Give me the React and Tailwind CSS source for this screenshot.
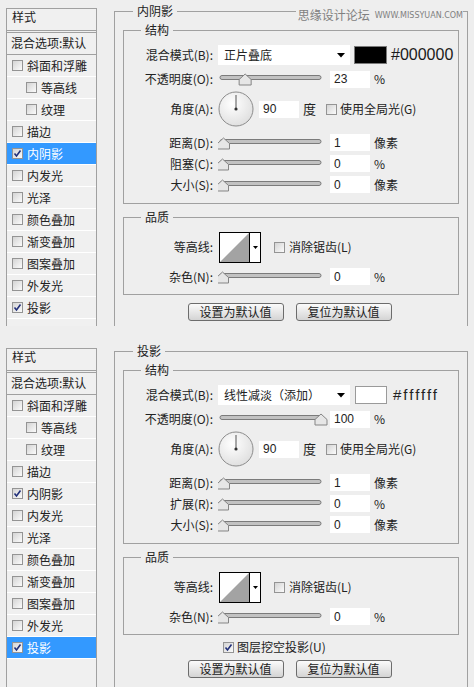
import React from "react";

const items = [
  { name: "斜面和浮雕" },
  { name: "等高线", indent: true },
  { name: "纹理", indent: true },
  { name: "描边" },
  { name: "内阴影", checked: true },
  { name: "内发光" },
  { name: "光泽" },
  { name: "颜色叠加" },
  { name: "渐变叠加" },
  { name: "图案叠加" },
  { name: "外发光" },
  { name: "投影", checked: true },
];

function Box({ checked }) {
  return (
    <span className="inline-flex h-[11px] w-[11px] shrink-0 items-center justify-center border border-[#949494] bg-linear-to-br from-[#d4d4d4] to-[#fbfbfb]">
      {checked && (
        <svg width="9" height="9" viewBox="0 0 9 9">
          <path d="M1.5 4.5 L3.5 7 L7.5 1.5" fill="none" stroke="#22307a" strokeWidth="1.6" />
        </svg>
      )}
    </span>
  );
}

function StyleList({ active, height }) {
  return (
    <div className={`ml-[6px] mt-[8px] w-[91px] shrink-0 border border-b-0 border-[#a0a0a0] bg-[#f0f0f0] ${height}`}>
      <div className="h-[24px] border-b-[3px] border-double border-[#a0a0a0] pl-[5px]">样式</div>
      <div className="flex h-[22px] items-center border-b border-[#a0a0a0] pb-[2px] pl-[4px]">混合选项:默认</div>
      {items.map((it) => (
        <div
          key={it.name}
          className={`flex h-[22px] items-center gap-[4px] border-b border-white ${it.indent ? "pl-[19px]" : "pl-[5px]"} ${
            active === it.name ? "bg-[#3399ff] text-white" : ""
          }`}
        >
          <Box checked={it.checked} />
          <span>{it.name}</span>
        </div>
      ))}
    </div>
  );
}

function Label({ children }) {
  return <span className="w-[89px] shrink-0 text-right">{children}</span>;
}

function Slider({ value }) {
  const cx = 4.5 + value * 0.985;
  return (
    <svg width="112" height="16" className="ml-[5px] shrink-0">
      <rect x="2" y="4.5" width="101" height="4" rx="2" fill="#c2c2c2" stroke="#7b7b7b" />
      <path
        d={`M${cx} 3 L${cx + 6} 8.5 L${cx + 6} 14 L${cx - 6} 14 L${cx - 6} 8.5 Z`}
        fill="#e6e6e6"
        stroke="#858585"
      />
    </svg>
  );
}

function Field({ value, className = "" }) {
  return (
    <span className={`flex h-[17px] w-[40px] shrink-0 items-center bg-white pl-[4px] font-[family-name:'Liberation_Sans',sans-serif] text-[12px] ${className}`}>
      {value}
    </span>
  );
}

function SliderRow({ label, value, unit }) {
  return (
    <div className="flex h-[21px] items-center">
      <Label>{label}</Label>
      <Slider value={value} />
      <Field value={value} />
      <span className="ml-[4px]">{unit}</span>
    </div>
  );
}

function Dial() {
  return (
    <svg width="36" height="36" className="ml-[5px] shrink-0">
      <defs>
        <radialGradient id="dialg" cx="40%" cy="35%" r="70%">
          <stop offset="0%" stopColor="#ffffff" />
          <stop offset="100%" stopColor="#dedede" />
        </radialGradient>
      </defs>
      <circle cx="18" cy="18" r="17" fill="url(#dialg)" stroke="#8c8c8c" />
      <line x1="18" y1="18" x2="18" y2="4" stroke="#555" />
      <circle cx="18" cy="18" r="1.6" fill="#333" />
    </svg>
  );
}

function Contour() {
  return (
    <svg width="42" height="31" className="ml-[6px] shrink-0">
      <rect x="0.5" y="0.5" width="41" height="30" fill="#fff" stroke="#000" />
      <polygon points="1,30 30,1 30,30" fill="#a3a3a3" />
      <line x1="30.5" y1="0" x2="30.5" y2="31" stroke="#000" />
      <polygon points="34,14 39,14 36.5,17" fill="#000" />
    </svg>
  );
}

function Arrow() {
  return (
    <svg width="8" height="5">
      <polygon points="0,0 8,0 4,4.5" fill="#000" />
    </svg>
  );
}

function Btn({ children }) {
  return (
    <button className="h-[18px] w-[96px] rounded-[3px] border border-[#6c6c6c] bg-linear-to-b from-[#fbfbfb] to-[#d4d4d4] text-[12px] leading-[16px] text-[#222]">
      {children}
    </button>
  );
}

function Panel({ title, mode, swatch, hex, opacity, second, active }) {
  return (
    <div className={`flex ${second ? "h-[347px]" : "h-[340px]"}`}>
      <StyleList active={active} height={second ? "h-[339px]" : "h-[318px]"} />
      <div className="ml-[17px] pt-[3px]">
        <fieldset
          className={`w-[354px] border border-b-0 border-[#a0a0a0] px-[8px] ${second ? "h-[344px]" : "h-[323px]"}`}
        >
          <legend className="ml-[10px] px-[4px] leading-[16px]">{title}</legend>

          <fieldset className="mt-[3px] border border-[#a0a0a0] pb-[8px] pt-[5px]">
            <legend className="ml-[17px] px-[4px] leading-[16px]">结构</legend>
            <div className="flex h-[24px] items-center">
              <Label>混合模式(B):</Label>
              <div className="ml-[5px] flex h-[20px] w-[132px] items-center justify-between bg-white pl-[6px] pr-[5px]">
                <span>{mode}</span>
                <Arrow />
              </div>
              {swatch === "black" ? (
                <span className="ml-[4px] h-[18px] w-[33px] border border-[#7a7a7a] bg-black" />
              ) : (
                <span className="ml-[5px] h-[18px] w-[32px] border border-[#9a9a9a] bg-white" />
              )}
              {swatch === "black" ? (
                <span className="ml-[4px] font-[family-name:'Liberation_Sans',sans-serif] text-[16px] leading-[18px] text-[#1a1a1a]">
                  {hex}
                </span>
              ) : (
                <span className="ml-[6px] font-[family-name:'Liberation_Sans',sans-serif] text-[15px] leading-[18px] tracking-[2px] text-[#222]">
                  {hex}
                </span>
              )}
            </div>
            <div className="flex h-[24px] items-center">
              <Label>不透明度(O):</Label>
              <Slider value={opacity} />
              <Field value={opacity} />
              <span className="ml-[4px]">%</span>
            </div>
            <div className="flex h-[36px] items-center">
              <Label>角度(A):</Label>
              <Dial />
              <Field value="90" className="ml-[5px]" />
              <span className="ml-[4px] text-[13px]">度</span>
              <span className="ml-[10px] flex items-center">
                <Box />
              </span>
              <span className="ml-[3px]">使用全局光(G)</span>
            </div>
            <div className="mt-[5px]">
              <SliderRow label="距离(D):" value={1} unit="像素" />
              <SliderRow label={second ? "扩展(R):" : "阻塞(C):"} value={0} unit="%" />
              <SliderRow label="大小(S):" value={0} unit="像素" />
            </div>
          </fieldset>

          <fieldset className="mt-[5px] border border-[#a0a0a0] pb-[7px] pt-[7px]">
            <legend className="ml-[17px] px-[4px] leading-[16px]">品质</legend>
            <div className="flex h-[30px] items-center">
              <Label>等高线:</Label>
              <Contour />
              <span className="ml-[13px] flex items-center">
                <Box />
              </span>
              <span className="ml-[4px]">消除锯齿(L)</span>
            </div>
            <div className="mt-[4px]">
              <SliderRow label="杂色(N):" value={0} unit="%" />
            </div>
          </fieldset>

          {second && (
            <div className="mt-[2px] flex h-[20px] items-center pl-[100px]">
              <Box checked />
              <span className="ml-[3px]">图层挖空投影(U)</span>
            </div>
          )}

          <div className={`-ml-[3px] flex justify-center gap-[12px] ${second ? "mt-[3px]" : "mt-[8px]"}`}>
            <Btn>设置为默认值</Btn>
            <Btn>复位为默认值</Btn>
          </div>
        </fieldset>
      </div>
    </div>
  );
}

export default function App() {
  return (
    <div className="relative h-[687px] w-[474px] overflow-hidden bg-[#eeeeee] font-[family-name:'Noto_Sans_CJK_SC',sans-serif] text-[12px] leading-[16px] text-[#222]">
      <Panel title="内阴影" mode="正片叠底" swatch="black" hex="#000000" opacity={23} active="内阴影" />
      <Panel title="投影" mode="线性减淡（添加）" swatch="white" hex="#ffffff" opacity={100} active="投影" second />

      {/* watermark */}
      <div className="absolute right-[11px] top-[7px] flex items-end gap-[5px] bg-[#eeeeee] pl-[2px] text-[#808080]">
        <span className="text-[12px] leading-[15px]">思缘设计论坛</span>
        <span className="font-[family-name:'DejaVu_Sans',sans-serif] text-[8px] leading-[12px]">WWW.MISSYUAN.COM</span>
      </div>
    </div>
  );
}
